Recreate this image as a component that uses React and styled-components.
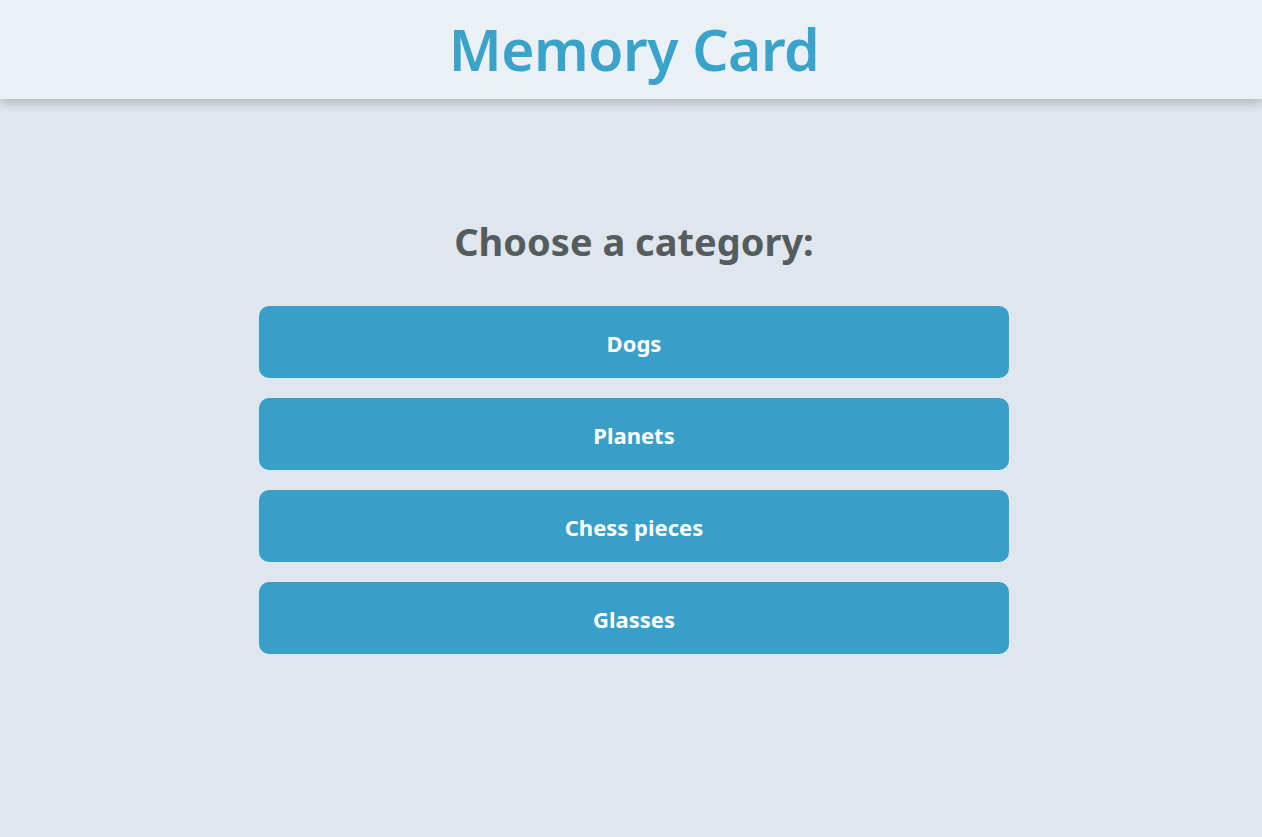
import React from "react";
import styled, { createGlobalStyle } from "styled-components";

const Global = createGlobalStyle`
  html, body { margin: 0; padding: 0; }
  body {
    background: #dfe6ee;
    font-family: "Noto Sans", "Open Sans", sans-serif;
    min-height: 837px;
  }
`;

const Page = styled.div`
  padding-left: 6px;
`;

const Header = styled.header`
  height: 99px;
  margin-left: -6px;
  padding-left: 6px;
  background: #eaf0f3;
  box-shadow: 0 4px 10px rgba(0, 0, 0, 0.22);
  display: flex;
  align-items: center;
  justify-content: center;
  position: relative;
  z-index: 1;
`;

const Title = styled.h1`
  margin: 0 0 2px;
  font-size: 57px;
  font-weight: 600;
  color: #3aa3c9;
  letter-spacing: -0.5px;
`;

const Main = styled.main`
  display: flex;
  flex-direction: column;
  align-items: center;
  padding-top: 115px;
`;

const Heading = styled.h2`
  margin: 0 0 38px;
  font-size: 38px;
  font-weight: 700;
  color: #545c5e;
  line-height: 54px;
`;

const List = styled.div`
  display: flex;
  flex-direction: column;
  gap: 20px;
  width: 750px;
`;

const CategoryButton = styled.button`
  height: 72px;
  padding: 2px 0 0;
  border: none;
  border-radius: 10px;
  background: #389fc8;
  color: #ffffff;
  font-family: inherit;
  font-size: 22px;
  font-weight: 700;
  cursor: pointer;
`;

const categories = ["Dogs", "Planets", "Chess pieces", "Glasses"];

export default function App() {
  return (
    <Page>
      <Global />
      <Header>
        <Title>Memory Card</Title>
      </Header>
      <Main>
        <Heading>Choose a category:</Heading>
        <List>
          {categories.map((c) => (
            <CategoryButton key={c}>{c}</CategoryButton>
          ))}
        </List>
      </Main>
    </Page>
  );
}
